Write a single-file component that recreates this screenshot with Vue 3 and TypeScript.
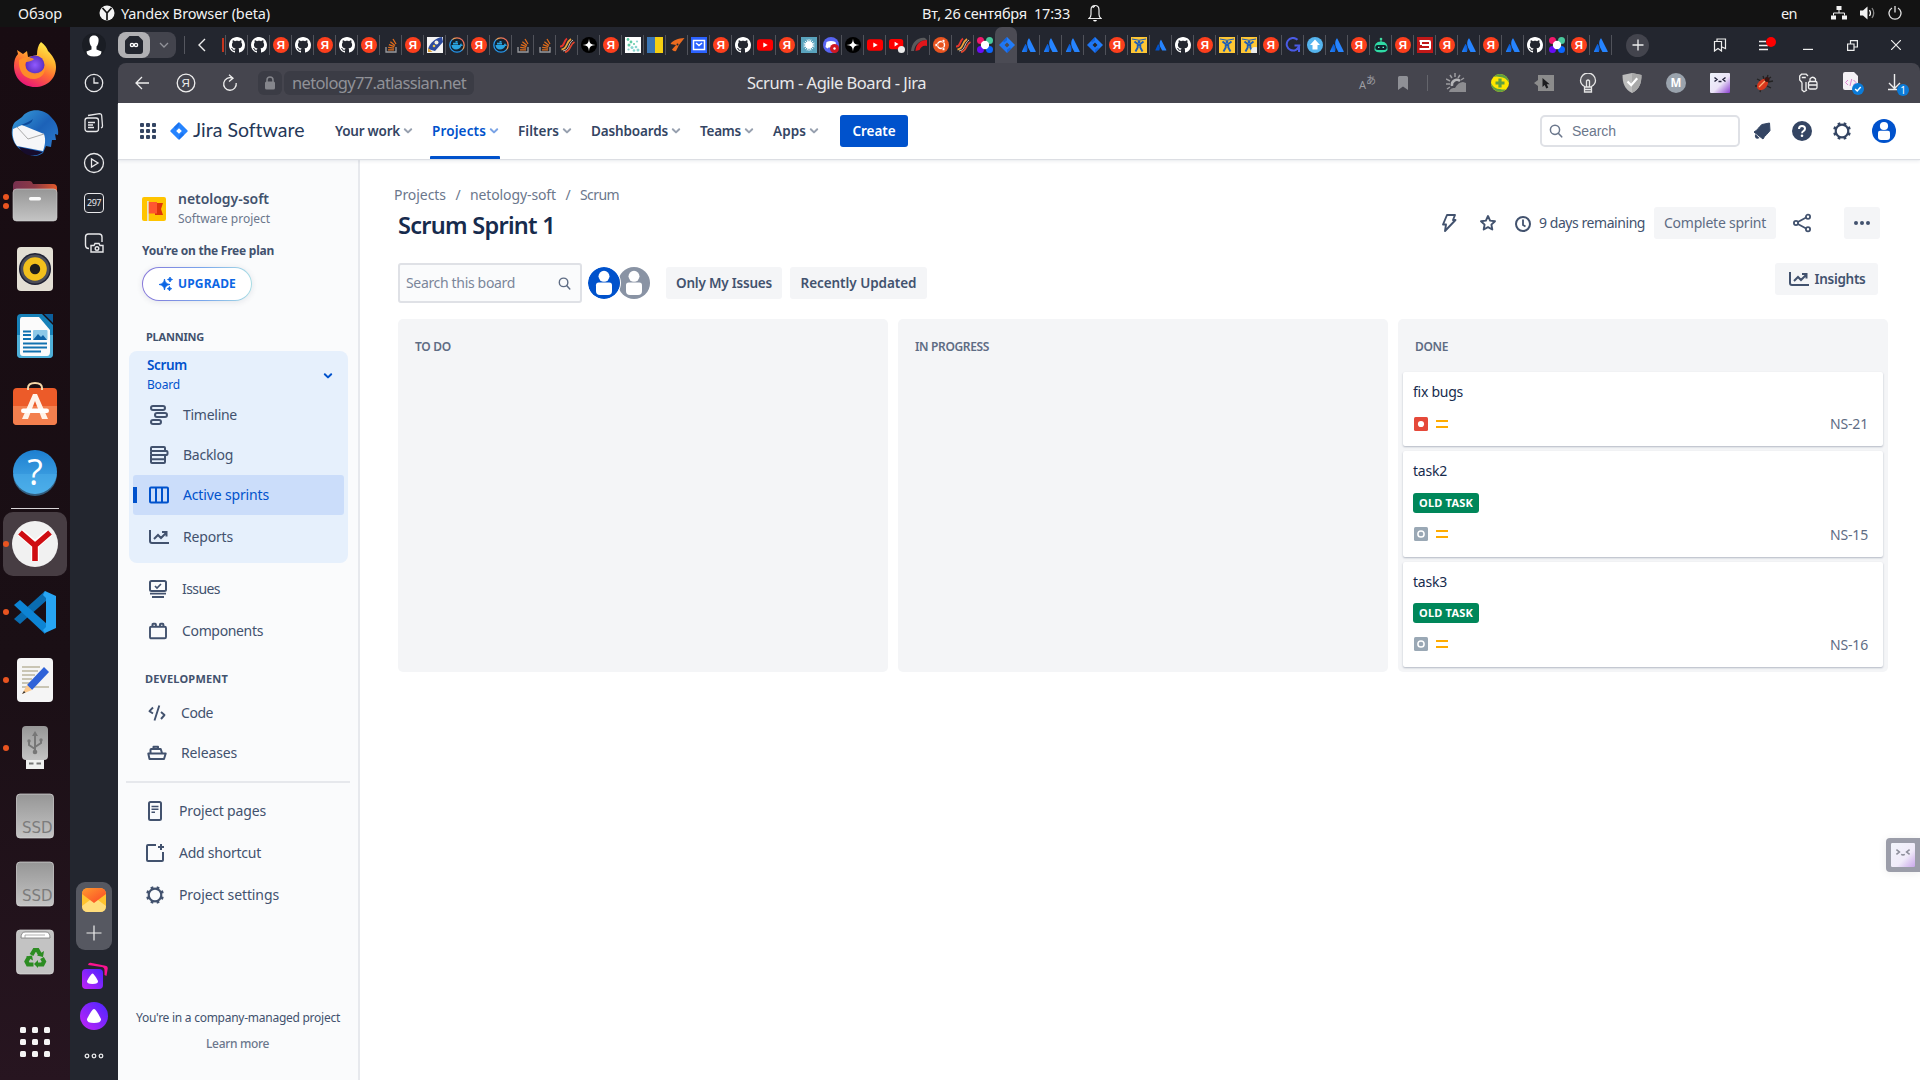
<script setup lang="ts">
import type { Directive } from 'vue'

// Tracks a label so that it takes exactly the given width.
const vFit: Directive<HTMLElement, number> = {
  mounted(el, { value }) {
    const n = (el.textContent ?? '').length
    const natural = el.getBoundingClientRect().width
    el.style.letterSpacing = `${((value - natural) / n).toFixed(3)}px`
    el.style.width = `${value}px`
  },
}

const tabs: string[] = (
  'gh gh ya gh ya gh ya so ya feather docker ya docker so so flame star ya molecule duo bird mail ya gh yt ya snow discord star yt ytdot arc ubuntu flame four ' +
  'jira atl atl atl jira ya jack atlsm gh ya jack jackdot ya g up atl ya robot ya sber ya atl ya atl gh four ya atl'
).split(' ')
const activeTab = 35

const extensions = ['weather', 'plus', 'cursor', 'bulb', 'shield', 'm', 'face', 'bug', 'key', 'codefile', 'download']

interface DockItem { icon: string; h: number; dots: number; active?: boolean }
const dockTop: DockItem[] = [
  { icon: 'firefox', h: 69, dots: 0 },
  { icon: 'thunderbird', h: 69, dots: 0 },
  { icon: 'files', h: 68, dots: 2 },
  { icon: 'rhythm', h: 67, dots: 0 },
  { icon: 'writer', h: 68, dots: 0 },
  { icon: 'software', h: 67, dots: 0 },
  { icon: 'help', h: 70, dots: 0 },
]
const dockBottom: DockItem[] = [
  { icon: 'yabrowser', h: 68, dots: 1, active: true },
  { icon: 'vscode', h: 68, dots: 1 },
  { icon: 'gedit', h: 68, dots: 1 },
  { icon: 'usb', h: 68, dots: 1 },
  { icon: 'ssd', h: 68, dots: 0 },
  { icon: 'ssd', h: 68, dots: 0 },
  { icon: 'trash', h: 68, dots: 0 },
]

const nav = [
  { label: 'Your work', w: 65 },
  { label: 'Projects', w: 54, active: true },
  { label: 'Filters', w: 41 },
  { label: 'Dashboards', w: 77 },
  { label: 'Teams', w: 41 },
  { label: 'Apps', w: 33 },
]

const boardItems = [
  { icon: 'timeline', label: 'Timeline', w: 54 },
  { icon: 'backlog', label: 'Backlog', w: 50 },
  { icon: 'board', label: 'Active sprints', w: 86, active: true },
  { icon: 'chart', label: 'Reports', w: 50 },
]

interface Card { title: string; w: number; label?: string; type: string; key: string }
interface Column { name: string; w: number; cards: Card[] }
const columns: Column[] = [
  { name: 'TO DO', w: 36, cards: [] },
  { name: 'IN PROGRESS', w: 74, cards: [] },
  {
    name: 'DONE',
    w: 33,
    cards: [
      { title: 'fix bugs', w: 50, type: 'bugtype', key: 'NS-21' },
      { title: 'task2', w: 34, label: 'OLD TASK', type: 'tasktype', key: 'NS-15' },
      { title: 'task3', w: 34, label: 'OLD TASK', type: 'tasktype', key: 'NS-16' },
    ],
  },
]
</script>

<template>
  <svg class="defs" width="0" height="0" aria-hidden="true">
    <defs>
      <linearGradient id="gFox" x1="0.8" y1="0" x2="0.3" y2="1"><stop offset="0" stop-color="#fff44f" /><stop offset=".35" stop-color="#ffb02e" /><stop offset=".6" stop-color="#ff6a34" /><stop offset="1" stop-color="#e8127c" /></linearGradient>
      <radialGradient id="gGlobe"><stop offset="0" stop-color="#9059ff" /><stop offset="1" stop-color="#5b2fc0" /></radialGradient>
      <linearGradient id="gBird" x1="0" y1="0" x2="1" y2="1"><stop offset="0" stop-color="#3aa0dc" /><stop offset=".5" stop-color="#1c62b8" /><stop offset="1" stop-color="#2f7fd0" /></linearGradient>
      <linearGradient id="gGrey" x1="0" y1="0" x2="0" y2="1"><stop offset="0" stop-color="#969696" /><stop offset="1" stop-color="#c4c4c4" /></linearGradient>
      <linearGradient id="gFold" x1="0" y1="0" x2="1" y2="0"><stop offset="0" stop-color="#77304f" /><stop offset=".5" stop-color="#8d3a45" /><stop offset="1" stop-color="#e2592b" /></linearGradient>
      <linearGradient id="gSky" x1="0" y1="0" x2="0" y2="1"><stop offset="0" stop-color="#1d7fd0" /><stop offset="1" stop-color="#4db0ea" /></linearGradient>
      <linearGradient id="gMail" x1="0" y1="0" x2="1" y2="1"><stop offset="0" stop-color="#ff9a2e" /><stop offset="1" stop-color="#fb4526" /></linearGradient>
      <linearGradient id="gAlice" x1="0" y1="1" x2="1" y2="0"><stop offset="0" stop-color="#c223f7" /><stop offset="1" stop-color="#4a26ff" /></linearGradient>
      <linearGradient id="gFace" x1="0" y1="0" x2="1" y2="1"><stop offset="0" stop-color="#eef3fb" /><stop offset=".55" stop-color="#ebe4f7" /><stop offset="1" stop-color="#8b3fd0" /></linearGradient>
      <linearGradient id="gSoft" x1="0" y1="0" x2="1" y2="1"><stop offset="0" stop-color="#f2f5fb" /><stop offset=".6" stop-color="#f0ebf9" /><stop offset="1" stop-color="#c9a6ea" /></linearGradient>
      <linearGradient id="gDock" x1="0" y1="1" x2="1" y2="0"><stop offset="0" stop-color="#2496ed" /><stop offset=".45" stop-color="#2496ed" /><stop offset=".6" stop-color="#f0a050" /><stop offset="1" stop-color="#e84a5f" /></linearGradient>
      <linearGradient id="gJira" x1="1" y1="0" x2="0" y2="1"><stop offset="0" stop-color="#2684ff" /><stop offset="1" stop-color="#1a6ff0" /></linearGradient>
      <linearGradient id="gAtl" x1="1" y1="0" x2="0" y2="1"><stop offset="0" stop-color="#0052cc" /><stop offset="1" stop-color="#2684ff" /></linearGradient>
    </defs>

    <!-- favicons -->
    <symbol id="gh" viewBox="0 0 16 16"><path fill="#fff" d="M8 0C3.58 0 0 3.58 0 8c0 3.54 2.29 6.53 5.47 7.59.4.07.55-.17.55-.38 0-.19-.01-.82-.01-1.49-2.01.37-2.53-.49-2.69-.94-.09-.23-.48-.94-.82-1.13-.28-.15-.68-.52-.01-.53.63-.01 1.08.58 1.23.82.72 1.21 1.87.87 2.33.66.07-.52.28-.87.51-1.07-1.78-.2-3.64-.89-3.64-3.95 0-.87.31-1.59.82-2.15-.08-.2-.36-1.02.08-2.12 0 0 .67-.21 2.2.82.64-.18 1.32-.27 2-.27s1.36.09 2 .27c1.53-1.04 2.2-.82 2.2-.82.44 1.1.16 1.92.08 2.12.51.56.82 1.27.82 2.15 0 3.07-1.87 3.75-3.65 3.95.29.25.54.73.54 1.48 0 1.07-.01 1.93-.01 2.2 0 .21.15.46.55.38A8.01 8.01 0 0 0 16 8c0-4.42-3.58-8-8-8z" /></symbol>
    <symbol id="so" viewBox="0 0 16 16"><path d="M3 10v5h10v-5" fill="none" stroke="#9a9b9e" stroke-width="1.3" /><path d="M5 12.8h6M5.2 10.3l5.9.8M5.9 7.6l5.5 2.1M7.4 4.8l4.6 3.7M10 2l3 5" stroke="#e06d1c" stroke-width="1.3" /></symbol>
    <symbol id="feather" viewBox="0 0 16 16"><path fill="#f4f4f4" d="M0 0h16v16H0z" /><path d="M1 12C3 6 8 1 15 0l1 5L8 14z" fill="#2c4a9c" /><circle cx="9.500" cy="5.500" r="2" fill="#f3efdf" /><circle cx="7" cy="9" r="1.300" fill="#e9c64a" /><path d="M1 11l4.500 4H1z" fill="#d9a03b" /></symbol>
    <symbol id="docker" viewBox="0 0 16 16"><circle cx="8" cy="8" r="7.2" fill="#14222f" stroke="url(#gDock)" stroke-width="1.300" /><path d="M2.500 8h8.400c.2-1 .8-1.500 1.200-1.800.5.500.7 1 .6 1.600.5 0 1 0 1.300.2-.3.800-1 1.100-1.800 1.100C11.500 11.500 9.500 12.500 7 12.500 4.300 12.500 2.600 10.800 2.500 8z M4 5.800h5v1.700H4z M6.500 4h2v1.500h-2z" fill="#2aa3e0" /></symbol>
    <symbol id="flame" viewBox="0 0 16 16"><path d="M1 9.500C6 10 4 4 8 1.500" stroke="#e5342c" stroke-width="2" fill="none" /><path d="M2.500 12.500C9 12 6 6 12 2" stroke="#f0a33a" stroke-width="1.800" fill="none" /><path d="M6 15c6-1 4-7 9.500-10" stroke="#e0452d" stroke-width="1.800" fill="none" /><path d="M4 14c7-1 4.500-7 10-11" stroke="#f5e0d0" stroke-width=".8" fill="none" /></symbol>
    <symbol id="star" viewBox="0 0 16 16"><circle cx="8" cy="8" r="8" fill="#000" /><path fill="#fff" d="M8 1.500C8.300 6.200 9.800 7.700 14.500 8 9.800 8.300 8.300 9.800 8 14.500 7.700 9.800 6.200 8.300 1.500 8 6.200 7.700 7.700 6.200 8 1.500z" /></symbol>
    <symbol id="molecule" viewBox="0 0 16 16"><path fill="#fff" d="M0 0h16v16H0z" /><g fill="#5fcba4"><circle cx="3" cy="2.500" r="1.400" /><circle cx="6" cy="5" r="1.400" /><circle cx="4" cy="8" r="1.500" /><circle cx="9" cy="7" r="1" /></g><g fill="#8ad6d0"><circle cx="7" cy="10.500" r="1.500" /><circle cx="11" cy="10" r="1.300" /><circle cx="13" cy="13" r="1.500" /><circle cx="9" cy="13.500" r="1.300" /><circle cx="12" cy="4.500" r="1.100" /><circle cx="3.500" cy="12.500" r="1.100" /></g></symbol>
    <symbol id="duo" viewBox="0 0 16 16"><path fill="#3b76b5" d="M0 0h8v16H0z" /><path fill="#f6cf12" d="M8 0h8v16H8z" /></symbol>
    <symbol id="bird" viewBox="0 0 16 16"><path fill="#ec6b1f" d="M15.500 1C9 1.500 4 3 1.500 7l5.500 1-4 4.500c1 1.500 2.500 2 4 1.500l3-6z" /><circle cx="8.500" cy="7.500" r="1" fill="#23262f" /></symbol>
    <symbol id="mail" viewBox="0 0 16 16"><rect width="16" height="16" fill="#2b62ff" /><path d="M2.500 3.500h11v9h-11zM5 6l3 2.500L11 6" fill="none" stroke="#fff" stroke-width="1.500" /></symbol>
    <symbol id="yt" viewBox="0 0 16 16"><rect y="2.300" width="16" height="11.400" rx="3" fill="#f00" /><path fill="#fff" d="M6.300 5.400v5.200L10.700 8z" /></symbol>
    <symbol id="ytdot" viewBox="0 0 18 18"><rect y="2.300" width="16" height="11.400" rx="3" fill="#f00" /><path fill="#fff" d="M6.300 5.400v5.200L10.700 8z" /><circle cx="14" cy="14" r="4" fill="#ececec" /></symbol>
    <symbol id="snow" viewBox="0 0 16 16"><rect width="16" height="16" fill="#59a3bd" /><circle cx="8" cy="8" r="3.800" fill="#fff" /><path d="M8 2v12M2.500 8h11M4 4l8 8M12 4l-8 8M6 2.500l4 11M10 2.500l-4 11M2.500 6l11 4M2.500 10l11-4" stroke="#fff" stroke-width=".8" /></symbol>
    <symbol id="discord" viewBox="0 0 16 16"><circle cx="8" cy="8" r="8" fill="#5865f2" /><path fill="#fff" d="M3.500 5Q8 3 12.500 5l1 5-2 1.500-1-1h-5l-1 1-2-1.500z" /><circle cx="11.500" cy="11.500" r="4.500" fill="#d01822" /><circle cx="11.500" cy="11.500" r="1.200" fill="#fff" /></symbol>
    <symbol id="arc" viewBox="0 0 16 16"><path d="M0 14C1 5 7 0 14 1l2 2C9 3 4 7 3 14z" fill="#5a5a5c" /><path d="M4.500 14C5 7 9 3 16 3v6c-4-1-6 1-7.500 4z" fill="#e0161b" /></symbol>
    <symbol id="ubuntu" viewBox="0 0 16 16"><circle cx="8" cy="8" r="8" fill="#e95420" /><circle cx="8" cy="8" r="3.500" fill="none" stroke="#fff" stroke-width="1.400" /><g fill="#fff" stroke="#e95420" stroke-width=".6"><circle cx="3.300" cy="8" r="1.500" /><circle cx="10.500" cy="3.900" r="1.500" /><circle cx="10.500" cy="12.100" r="1.500" /></g></symbol>
    <symbol id="four" viewBox="0 0 16 16"><circle cx="3.500" cy="3.500" r="3.500" fill="#f0196b" /><circle cx="12.500" cy="3.500" r="3.500" fill="#49c99c" /><circle cx="3.500" cy="12.500" r="3.500" fill="#6a0df5" /><circle cx="12.500" cy="12.500" r="3.500" fill="#0b66ff" /><circle cx="8" cy="8" r="4.200" fill="#fff" /></symbol>
    <symbol id="jira" viewBox="0 0 16 16"><path fill="url(#gJira)" fill-rule="evenodd" d="M8 0l8 8-8 8-8-8zM8 5.500L5.500 8 8 10.500 10.500 8z" /><path d="M8 0v3.500L5 5.500 4 4zM8 16v-3.500l3-2 1 1.500z" fill="#0a56cf" opacity=".6" /></symbol>
    <symbol id="jiralogo" viewBox="0 0 16 16"><path fill="#2684ff" fill-rule="evenodd" d="M7.300.6q.7-.7 1.400 0l6.700 6.700q.7.7 0 1.400l-6.700 6.700q-.7.7-1.400 0L.6 8.700q-.7-.7 0-1.400zM8 5.500L5.500 8 8 10.500 10.500 8z" /><path d="M8 .3v3.200L5 6.500 3.500 4.500zM8 15.700v-3.200l3-3 1.500 2z" fill="#0f62e0" opacity=".5" /></symbol>
    <symbol id="atl" viewBox="0 0 16 16"><path d="M4.900 7.300c-.3-.3-.6-.2-.8.1L1 14.300c-.2.400 0 .7.4.7h4.500C7 12.500 6.700 9.300 4.900 7.300z" fill="url(#gAtl)" /><path d="M7.600 1.600c-1.900 3-1.700 6.300-.5 8.800l2.200 4.300c.1.200.2.300.4.300h4.600c.4 0 .6-.4.400-.7L8.300 1.600c-.2-.3-.5-.3-.7 0z" fill="#2684ff" /></symbol>
    <symbol id="atlsm" viewBox="-2 -2 20 20"><path d="M4.900 7.300c-.3-.3-.6-.2-.8.1L1 14.300c-.2.400 0 .7.4.7h4.500C7 12.500 6.700 9.300 4.900 7.300z" fill="#0052cc" /><path d="M7.600 1.600c-1.900 3-1.700 6.300-.5 8.800l2.200 4.300c.1.200.2.300.4.300h4.600c.4 0 .6-.4.400-.7L8.300 1.600c-.2-.3-.5-.3-.7 0z" fill="#2684ff" /></symbol>
    <symbol id="jack" viewBox="0 0 16 16"><rect width="16" height="16" fill="#ffc734" /><g fill="none" stroke="#1f5fb8" stroke-width="1.900"><path d="M1 2q7 2.500 14 0" stroke-width="1" /><path d="M3.500 4.500L8 8l4.500-3.500M6.700 8v2.500L4.500 14.500M9.300 8v2.500l2.200 4" /></g><circle cx="8" cy="5" r="1.400" fill="#1f5fb8" /></symbol>
    <symbol id="jackdot" viewBox="0 0 16 16"><rect width="16" height="16" fill="#ffc734" /><g fill="none" stroke="#1f5fb8" stroke-width="1.900"><path d="M1 2q7 2.500 14 0" stroke-width="1" /><path d="M3.500 4.500L8 8l4.500-3.500M6.700 8v2.500L4.500 14.500M9.300 8v2.500l2.200 4" /></g><circle cx="8" cy="5" r="1.400" fill="#1f5fb8" /><circle cx="14" cy="14" r="4" fill="#ececec" /></symbol>
    <symbol id="g" viewBox="0 0 16 16"><path d="M12.500 2.800A6.300 6.300 0 1 0 14.200 8.500H9.500M14 8.500V15" fill="none" stroke="#4a5be6" stroke-width="2" /></symbol>
    <symbol id="up" viewBox="0 0 16 16"><circle cx="8" cy="8" r="8" fill="#55b4ee" /><path fill="#fff" d="M8 2.500l5 5.500h-2.500v4.500h-5V8H3z" /></symbol>
    <symbol id="robot" viewBox="0 0 16 16"><circle cx="8" cy="2" r="1.300" fill="#3fd9a0" /><path d="M8 2v3" stroke="#3fd9a0" /><path d="M1.500 13Q.5 4.500 8 4.500T14.500 13Q13 15.500 8 15.500T1.500 13z" fill="#2fdba6" /><rect x="2.300" y="8" width="11.400" height="5" rx="2.500" fill="#10202a" /><path d="M5 10.300h1.500M9.500 10.300H11" stroke="#62f0d0" stroke-width="1.300" /></symbol>
    <symbol id="sber" viewBox="0 0 16 16"><rect width="16" height="16" fill="#c01818" /><path d="M2.500 4H12q1 0 1 1v6q0 1-1 1H2.500M5 8h8M4 4v4" fill="none" stroke="#fff" stroke-width="2" /></symbol>

    <!-- toolbar extensions -->
    <symbol id="weather" viewBox="0 0 20 20"><g stroke="#9c9ca0" stroke-width="1.500"><path d="M9 0v4M4 2l2 3M0 6l4 2M0 11h4M14 2l-2 3M1 16l3-2M18 5l-3 2" /></g><path d="M6 13a5 5 0 0 1 8-5" fill="none" stroke="#b5b5b8" stroke-width="2.500" /><path d="M3 19c1-4 4-4 6-4 2-4 5-6 8-6l3 1v9z" fill="#8c8c90" /></symbol>
    <symbol id="plus" viewBox="0 0 20 20"><circle cx="10" cy="10" r="9" fill="#ffe600" /><path d="M3.500 4A9 9 0 0 1 19 10Q16 4 10 4 6 3 3.500 4zM16.500 16A9 9 0 0 1 1 10q3 6 9 6 4 1 6.500 0z" fill="#5fa042" /><path d="M10 5.500v9M5.500 10h9" stroke="#5fa042" stroke-width="3.200" /></symbol>
    <symbol id="cursor" viewBox="0 0 20 20"><path d="M4 2h16v16H4v-5l-4-3 4-3z" fill="#8c8c8c" /><path d="M8.500 5v9l2.200-2 1.600 3.500 2-1-1.600-3.300h3z" fill="#1d1d1f" /></symbol>
    <symbol id="bulb" viewBox="0 0 20 20"><path d="M6.500 13.500C4 12 2.500 10 2.500 7.500a7.500 7.500 0 0 1 15 0c0 2.500-1.500 4.500-4 6V19h-7z" fill="#55555c" stroke="#e5e5e5" stroke-width="1.300" /><path d="M8.500 14V8q1.500-2 3 0v6M6.500 14h7M7 16.500h6" fill="none" stroke="#e5e5e5" stroke-width="1.300" /></symbol>
    <symbol id="shield" viewBox="0 0 20 20"><path d="M10 0l9.500 2c0 8-2 14-9.500 18C2.500 16 .5 10 .5 2z" fill="#bcbcbc" /><path d="M10 0l9.500 2c0 8-2 14-9.500 18z" fill="#a9a9a9" /><path d="M5.500 8.500l3.700 3.700 6-7" fill="none" stroke="#fff" stroke-width="2.200" /></symbol>
    <symbol id="face" viewBox="0 0 20 20"><rect width="20" height="20" rx="1" fill="url(#gFace)" /><path d="M4.500 4.500l2.500 2-2.500 2M15.500 4.500l-2.500 2 2.500 2M8.500 8.500h3" fill="none" stroke="#22223a" stroke-width="1.400" /></symbol>
    <symbol id="bug" viewBox="0 0 20 20"><path d="M3 6l4 2M9 3l1 3M1 13h4M6 19l1-4M17 4l-3 2M19 8l-5 1M17 15l-4-2M14 2l-1 3" stroke="#222" stroke-width="1.300" /><ellipse cx="8.500" cy="11.500" rx="4.500" ry="6.500" transform="rotate(42 8.500 11.500)" fill="#d8371c" /><circle cx="13" cy="6.500" r="2.500" fill="#3a1512" /><path d="M5 14l6-6" stroke="#ffb27a" stroke-width="1.300" /></symbol>
    <symbol id="key" viewBox="0 0 20 20"><path d="M4 9.500L1.700 7V3L3.500 1.200h4.700L10 3M4 9.500V17l2 1.700 3-1.700M3.800 4.500h4M8 9v8" fill="none" stroke="#f0f0f0" stroke-width="1.300" /><rect x="10.500" y="8.500" width="8.500" height="7.500" rx="1.500" fill="none" stroke="#f0f0f0" stroke-width="1.300" /><path d="M12 8.500V6q2.700-3.500 5.500 0v2.500M10.500 12H19" fill="none" stroke="#f0f0f0" stroke-width="1.300" /></symbol>
    <symbol id="codefile" viewBox="0 0 24 24"><path d="M3 3q0-2 2-2h9l4 4v14H5q-2 0-2-2z" fill="#f3f0f4" /><path d="M8 9l-2.500 2.500L8 14M13.500 9l2.500 2.500L13.500 14M11.700 8l-1.700 7" stroke="#dd7fcf" fill="none" /><circle cx="18" cy="18" r="6" fill="#0b7bd8" /><path d="M15.200 18l2 2 3.500-4" fill="none" stroke="#fff" stroke-width="1.500" /></symbol>

    <!-- dock -->
    <symbol id="firefox" viewBox="0 0 48 48"><path d="M30 2c4 3 6 6 7 9 4 4 8 9 8 16 0 12-9 20-21 20S3 38 3 26c0-5 1-9 4-12l-1-4 6 4 4-3 1 6 9-2c0-5 1-10 4-13z" fill="url(#gFox)" /><circle cx="24" cy="25" r="9.500" fill="url(#gGlobe)" /><path d="M8 20c4-3 10-4 15-1-2 3-8 2-9 4 0 6 3 9 8 10 6 1 10-2 12-7 1 8-5 13-11 13C13 39 7 31 8 20z" fill="#ff9426" opacity=".9" /></symbol>
    <symbol id="thunderbird" viewBox="0 0 48 48"><path d="M11 8C17-1 33-1 40 8c5 5 8 10 7 18l-3-1 1 6-4 0-1 7-5-1-3 7c-7 5-14 3-20-2C0 36-2 20 4 13z" fill="url(#gBird)" /><path d="M2 20l9-4 22 9c2 6 1 11-1 17L6 37C2 32 1 25 2 20z" fill="#f6f6f8" /><path d="M6 18l11 12 16-5" fill="none" stroke="#aaa" /><path d="M8 38l24 5q-7 5-15 3-6-2-9-8z" fill="#160c2c" /><path d="M10 16q8-3 12-6-2 7-12 6z" fill="#0d4a9a" /></symbol>
    <symbol id="files" viewBox="0 0 48 48"><path d="M2 9q0-5 4-5h13q2 0 3 3h20q4 0 4 4v10H2z" fill="url(#gFold)" /><rect x="2" y="12" width="44" height="32" rx="3.500" fill="url(#gGrey)" stroke="#d0d0d0" stroke-width=".6" /><rect x="18" y="20" width="12" height="3.400" rx="1.600" fill="#fafafa" /></symbol>
    <symbol id="rhythm" viewBox="0 0 48 48"><rect x="6" y="2" width="36" height="44" rx="4" fill="#e3dfd4" /><circle cx="24" cy="24" r="16" fill="#1e2133" /><circle cx="24" cy="24" r="14.500" fill="#4c4e58" /><circle cx="24" cy="24" r="11.800" fill="#f2c01c" /><circle cx="24" cy="24" r="5.200" fill="#1d1d1d" /></symbol>
    <symbol id="writer" viewBox="0 0 48 48"><path d="M10 2h21l11 11v29q0 4-4 4H10q-4 0-4-4V6q0-4 4-4z" fill="#1781b8" /><path d="M6 23h36v19q0 4-4 4H10q-4 0-4-4z" fill="#4fb0d8" /><path d="M11 5h17l11 13v22q0 4-3 4H12q-3 0-3-3V8q0-3 2-3z" fill="#fbfbfb" /><path d="M33 2h9v9z" fill="#0c5f9c" /><path d="M12 19.500h8M12 23h8M12 27h8M12 31.500h24M12 35.500h24M12 39.500h18" stroke="#1272b0" stroke-width="2" /><rect x="22" y="18" width="14.500" height="10" rx="1" fill="#8cc8e8" /><path d="M22 28l5-6 3 3 2-2 4 5z" fill="#0c62a6" /></symbol>
    <symbol id="software" viewBox="0 0 48 48"><path d="M17 11V8q0-5 7-5t7 5v3" fill="none" stroke="#f6d7a8" stroke-width="2" /><rect x="2" y="8" width="44" height="37" rx="4" fill="#ec5b29" /><path d="M2 26h44v15q0 4-4 4H6q-4 0-4-4z" fill="#f37f4e" /><path d="M17 10V8M31 10V8" stroke="#f6d7a8" stroke-width="2" /><path d="M22 14h4l11 25h-6l-7-18-7 18h-6z" fill="#fff3ea" /><rect x="10" y="28.500" width="28" height="4.500" rx="2.200" fill="#fff" /></symbol>
    <symbol id="yabrowser" viewBox="0 0 48 48"><circle cx="24" cy="24" r="23" fill="#f1f1f1" /><path d="M9.500 12.500L24 25v16M38.500 12.500L24 25" fill="none" stroke="#fff" stroke-width="8" /><path d="M9 12.500L24 25.500V41M39 12.500L24 25.500" fill="none" stroke="#cf0d12" stroke-width="5.600" /></symbol>
    <symbol id="vscode" viewBox="0 0 48 48"><path d="M3 31l6 5L36 12 34 3z" fill="#0a6cb0" /><path d="M3 17l6-5 27 24-2 10z" fill="#0d84d4" /><path d="M34 3l11 5v32l-11 5-2-3 3-3V10l-3-3z" fill="#27a5f3" /></symbol>
    <symbol id="gedit" viewBox="0 0 48 48"><rect x="6" y="2" width="36" height="44" rx="4" fill="#f5f5f5" /><path d="M11 11h18M11 15h16M11 19h13M11 23h10M11 27h8M11 31h27" stroke="#c9c5b4" stroke-width="1.800" /><path d="M16 29L33 11l5 5-17 18z" fill="#2f62d8" /><path d="M11 38l5-9 5 5z" fill="#fbc88c" /><path d="M11 38l2-3 1.500 1.500z" fill="#333" /></symbol>
    <symbol id="usb" viewBox="0 0 48 48"><rect x="15" y="33" width="18" height="12" fill="#f0f0f0" /><path d="M18 38.500h4.500v2H18zM25.500 38.500H30v2h-4.500z" fill="#777" /><rect x="11" y="2" width="26" height="34" rx="4" fill="url(#gGrey)" /><path d="M24 28V11M18 17v4l6 4M30 16v3l-6 4" fill="none" stroke="#777" stroke-width="2" /><path d="M24 7l3 5h-6z" fill="#777" /><circle cx="24" cy="28" r="2.300" fill="#777" /><circle cx="18" cy="17" r="1.700" fill="#777" /><circle cx="30" cy="16" r="1.700" fill="#777" /></symbol>
    <symbol id="trash" viewBox="0 0 48 48"><rect x="5.500" y="2" width="37" height="44" rx="3.500" fill="#c3c3c3" stroke="#ddd" stroke-width=".7" /><path d="M10 10q0-6 4-6h21q4 0 4 6z" fill="#fff" stroke="#777" stroke-width=".8" /><path d="M14 10V7h20" fill="none" stroke="#999" stroke-width=".8" /><g fill="none" stroke="#2c8c22" stroke-width="4.200"><path d="M20.500 27l3-5h3l2.500 4.500M31 30l2 3.500-1.500 3H26M22.500 36.500H17l-1.500-3L18 29" /></g><path d="M26 27.500l6 1.500 1-6zM27 32v8l-4-4zM15 28.500l6-1 1 5z" fill="#2c8c22" /></symbol>

    <!-- Jira glyphs -->
    <symbol id="chev" viewBox="0 0 10 8"><path d="M1.800 2.200L5 5.400l3.200-3.200" fill="none" stroke="currentColor" stroke-width="2" stroke-linecap="round" stroke-linejoin="round" /></symbol>
    <symbol id="search" viewBox="0 0 14 14"><circle cx="6" cy="5.800" r="4.600" fill="none" stroke="currentColor" stroke-width="1.500" /><path d="M9.300 9.200l3.400 3.600" stroke="currentColor" stroke-width="1.600" stroke-linecap="round" /></symbol>
    <symbol id="gear" viewBox="0 0 20 20"><circle cx="10" cy="10" r="6.300" fill="none" stroke="currentColor" stroke-width="2.200" /><path d="M7.600 4.500L6.700 1.700M12.400 4.500l.9-2.800M7.600 15.500l-.9 2.800M12.400 15.500l.9 2.800M4.500 7.600l-2.800-.9M4.500 12.400l-2.800.9M15.500 7.600l2.800-.9M15.500 12.400l2.800.9" stroke="currentColor" stroke-width="2.800" /></symbol>
    <symbol id="person" viewBox="0 0 24 24"><circle cx="12" cy="12" r="12" fill="currentColor" /><circle cx="12" cy="7" r="4.100" fill="#fff" /><path d="M6 13.700q0-2 2-2h8q2 0 2 2V18q0 3-3 3H9q-3 0-3-3z" fill="#fff" /></symbol>
    <symbol id="timeline" viewBox="0 0 20 20"><g fill="none" stroke="currentColor" stroke-width="2"><rect x="2" y="1" width="14" height="4" rx="2" /><rect x="6" y="8" width="12" height="4" rx="2" /><rect x="2" y="15" width="10" height="4" rx="2" /></g></symbol>
    <symbol id="backlog" viewBox="0 0 20 20"><g fill="none" stroke="currentColor" stroke-width="2"><path d="M2 6V3q0-1 1-1h12q1 0 1 1v3M2 10v7q0 1 1 1h12q1 0 1-1v-7M2 14.200h14" /><rect x="2" y="6" width="16.500" height="4" rx="1" /></g></symbol>
    <symbol id="board" viewBox="0 0 20 20"><path d="M1 3.500q0-1 1-1h16q1 0 1 1v13q0 1-1 1H2q-1 0-1-1zM7 2.500v15M13 2.500v15" fill="none" stroke="currentColor" stroke-width="2" /></symbol>
    <symbol id="chart" viewBox="0 0 20 20"><path d="M1 3v11q0 2 2 2h17" fill="none" stroke="currentColor" stroke-width="2" /><path d="M5 12l4-4 3 3 5-5M13 5h4.500v4.500" fill="none" stroke="currentColor" stroke-width="2" /></symbol>
    <symbol id="issues" viewBox="0 0 18 18"><rect x="1" y="1" width="16" height="10" rx="1.500" fill="none" stroke="currentColor" stroke-width="2" /><path d="M6 6l2 2 4-4" fill="none" stroke="currentColor" stroke-width="1.700" /><path d="M1 13.700h16M3 17h12" stroke="currentColor" stroke-width="1.800" /></symbol>
    <symbol id="components" viewBox="0 0 18 18"><path d="M1 6q0-1.300 1.300-1.300h13.400Q17 4.700 17 6v9q0 1.300-1.300 1.300H2.300Q1 16.300 1 15zM3.500 4.500v-2q0-.7.700-.7h2q.7 0 .7.700v2M11 4.500v-2q0-.7.700-.7h2q.7 0 .7.700v2" fill="none" stroke="currentColor" stroke-width="1.900" /></symbol>
    <symbol id="code" viewBox="0 0 18 18"><path d="M5 3.500L1.500 7.200 5 9.500M13 8l3.500 3-3.500 4M11.300 1.500l-4.800 15" fill="none" stroke="currentColor" stroke-width="1.900" stroke-linejoin="round" /></symbol>
    <symbol id="ship" viewBox="0 0 20 18"><path d="M1.300 9.500h17.400l-1.700 5.500H2.500zM3.500 9V5.800q0-.8.800-.8h9.400l1.300 4M6.500 4.500V2.700h4.500v1.800" fill="none" stroke="currentColor" stroke-width="2" stroke-linejoin="round" /></symbol>
    <symbol id="page" viewBox="0 0 20 20"><rect x="4" y="1" width="12" height="18" rx="1.500" fill="none" stroke="currentColor" stroke-width="2" /><path d="M6.500 5.500h7M6.500 8.300h7M6.500 11.200h3.500" stroke="currentColor" stroke-width="1.600" /></symbol>
    <symbol id="shortcut" viewBox="0 0 20 20"><path d="M11 2H3q-1 0-1 1v14q0 1 1 1h14q1 0 1-1V9" fill="none" stroke="currentColor" stroke-width="2" /><path d="M16 1v6M13 4h6" stroke="currentColor" stroke-width="2" /></symbol>
    <symbol id="bugtype" viewBox="0 0 14 14"><rect width="14" height="14" rx="1.500" fill="#e5493a" /><circle cx="7" cy="7" r="3.100" fill="#fff" /></symbol>
    <symbol id="tasktype" viewBox="0 0 14 14"><rect width="14" height="14" rx="1.500" fill="#9aa8b5" /><circle cx="7" cy="7" r="3.100" fill="none" stroke="#fff" stroke-width="1.500" /></symbol>
  </svg>

  <div class="screen">
    <header class="sysbar">
      <span v-fit="44" class="t obzor">Обзор</span>
      <svg width="16" height="16" viewBox="0 0 16 16"><circle cx="8" cy="8" r="7.500" fill="#f2f2f2" /><path d="M3.500 3L8 8v7M12.500 3L8 8" fill="none" stroke="#131313" stroke-width="1.700" /></svg>
      <span v-fit="149" class="t appname">Yandex Browser (beta)</span>
      <span v-fit="148" class="t date">Вт, 26 сентября&nbsp; 17:33</span>
      <svg class="sysbell" width="14" height="18" viewBox="0 0 14 18"><path d="M1 14.500q2-1.500 2-4V6q0-4.500 4-4.500T11 6v4.500q0 2.500 2 4zM5 4q0-1.500 2-1.500" fill="none" stroke="#eee" stroke-width="1.200" /><path d="M5 16h4q-.5 1.500-2 1.500T5 16z" fill="#fff" /></svg>
      <span v-fit="16" class="t lang">en</span>
      <svg class="net" width="16" height="14" viewBox="0 0 16 14"><path d="M5.500 0h5v4h-5zM0 9.500h5v4H0zM11 9.500h5v4h-5z" fill="#f2f2f2" /><path d="M8 4v3M2.500 9.500V7h11v2.500" fill="none" stroke="#f2f2f2" /></svg>
      <svg class="vol" width="16" height="14" viewBox="0 0 16 14"><path d="M0 4.500h3L7.500.5v13L3 9.500H0z" fill="#f2f2f2" /><path d="M9.500 4q2 3 0 6" fill="none" stroke="#f2f2f2" stroke-width="1.300" /><path d="M12 2q3.500 5 0 10" fill="none" stroke="#888" stroke-width="1.300" /></svg>
      <svg class="pow" width="14" height="14" viewBox="0 0 14 14"><path d="M4 2a6 6 0 1 0 6 0M7 0v6.500" fill="none" stroke="#e4e4e4" stroke-width="1.300" /></svg>
    </header>

    <div class="desktop">
      <aside class="dock">
        <div class="dock-list first">
          <div v-for="d in dockTop" :key="d.icon" class="dock-item" :style="{ height: d.h + 'px' }">
            <div class="dots"><i v-for="n in d.dots" :key="n" /></div>
            <svg v-if="d.icon === 'help'" width="48" height="48" viewBox="0 0 48 48"><circle cx="24" cy="24" r="22" fill="url(#gSky)" /><path d="M2 26h44a22 22 0 0 1-44 0z" fill="#4caeea" opacity=".5" /><text x="24" y="37" text-anchor="middle" font-family="Open Sans, sans-serif" font-size="36" fill="#fff">?</text></svg>
            <svg v-else width="48" height="48"><use :href="'#' + d.icon" /></svg>
          </div>
        </div>
        <div class="dock-sep" />
        <div class="dock-list">
          <div v-for="(d, i) in dockBottom" :key="i" class="dock-item" :class="{ running: d.active }" :style="{ height: d.h + 'px' }">
            <div class="dots"><i v-for="n in d.dots" :key="n" /></div>
            <svg v-if="d.icon === 'ssd'" width="48" height="48" viewBox="0 0 48 48"><rect x="5.500" y="2" width="37" height="44" rx="3.500" fill="url(#gGrey)" stroke="#ddd" stroke-width=".7" /><text x="11" y="40.500" font-family="DejaVu Sans, sans-serif" font-size="15" textLength="30.500" fill="#7c7c7c">SSD</text></svg>
            <svg v-else width="48" height="48"><use :href="'#' + d.icon" /></svg>
          </div>
        </div>
        <div class="apps-grid"><i v-for="n in 9" :key="n" /></div>
      </aside>

      <aside class="ybar">
        <svg class="y1" width="24" height="24" viewBox="0 0 24 24"><circle cx="12" cy="12" r="12" fill="#1a1d24" /><path d="M12 2.500c3.500 0 5 2.500 4.500 6-.3 2.500-1 4-2 5v3l5 2q0 5-7.500 5T4.500 18.500l5-2v-3c-1-1-1.700-2.500-2-5C7 5 8.500 2.500 12 2.500z" fill="#fff" /></svg>
        <svg class="y2" width="22" height="22" viewBox="0 0 22 22" fill="none" stroke="#e8e8ea" stroke-width="1.300"><circle cx="11" cy="11" r="8.700" /><path d="M11 5.500V11h4.500" /></svg>
        <svg class="y3" width="22" height="22" viewBox="0 0 22 22" fill="none" stroke="#e8e8ea" stroke-width="1.300"><rect x="2" y="6" width="13.500" height="13.500" rx="2.500" /><path d="M5 3.500L16.500 1.700q2 0 2.200 2L19.500 14q0 1.500-1.500 2M5 10.500h7M5 13h5M5 15.500h6" /></svg>
        <svg class="y4" width="22" height="22" viewBox="0 0 22 22" fill="none" stroke="#e8e8ea" stroke-width="1.300"><circle cx="11" cy="11" r="9.500" /><path d="M8.500 7v8l6.500-4z" /></svg>
        <div class="count"><span v-fit="14" class="t">297</span></div>
        <svg class="y6" width="22" height="22" viewBox="0 0 22 22" fill="none" stroke="#e8e8ea" stroke-width="1.400"><path d="M6 16.500q-3.500 0-3.500-3.500V5q0-3 3-3h10.500q3 0 3 3v5" /><path d="M8 13.500h3l1-2h4l1 2h3v6.500H8z" /><circle cx="14" cy="16.500" r="1.800" /></svg>
        <div class="ygroup">
          <svg width="24" height="24" viewBox="0 0 24 24"><rect width="24" height="24" rx="6" fill="#ffc32e" /><path d="M0 18L12 9l12 9q0 6-6 6H6q-6 0-6-6z" fill="#ffdd7c" /><path d="M0 6q0-6 6-6h12q6 0 6 6L12 15z" fill="url(#gMail)" /></svg>
          <svg width="16" height="16" viewBox="0 0 16 16"><path d="M8 .5v15M.5 8h15" stroke="#eee" stroke-width="1.200" /></svg>
        </div>
        <svg class="y7" width="26" height="28" viewBox="0 0 26 28"><path d="M6 3Q6.500.500 8.500.700l15 3q2.700.6 2.200 3L24.500 14l-2-1V8.500Q22.500 5 19.500 5z" fill="#fa1390" /><rect y="7" width="21" height="20" rx="4" fill="url(#gAlice)" /><path d="M10.500 11.500q1.500 0 5.500 7.500.5 3-5.500 3T5 19q4-7.500 5.500-7.500z" fill="#fff" /></svg>
        <svg class="y8" width="28" height="28" viewBox="0 0 28 28"><circle cx="14" cy="14" r="14" fill="url(#gAlice)" /><path d="M14 7q2 0 7 10 .5 4-7 4t-7-4q5-10 7-10z" fill="#fff" /></svg>
        <svg class="y9" width="20" height="6" viewBox="0 0 20 6" fill="none" stroke="#e8e8ea" stroke-width="1.300"><circle cx="3" cy="3" r="1.800" /><circle cx="10" cy="3" r="1.800" /><circle cx="17" cy="3" r="1.800" /></svg>
      </aside>

      <div class="browser">
        <div class="tabstrip">
          <div class="private">
            <div class="private-on"><svg width="18" height="18" viewBox="0 0 18 18"><path d="M4.500 0h9L18 4.500V15q0 3-3 3H3q-3 0-3-3V4.500z" fill="#23262f" /><circle cx="7" cy="9" r="1.600" fill="none" stroke="#fff" stroke-width="1.400" /><circle cx="11" cy="9" r="1.600" fill="none" stroke="#fff" stroke-width="1.400" /></svg></div>
            <svg class="pchev" width="10" height="8" viewBox="0 0 10 8"><path d="M1 2l4 4 4-4" fill="none" stroke="#92939a" stroke-width="1.300" /></svg>
          </div>
          <i class="vsep" />
          <svg class="tback" width="10" height="14" viewBox="0 0 10 14"><path d="M8 1L2 7l6 6" fill="none" stroke="#eee" stroke-width="1.400" /></svg>
          <i class="halftab" />
          <div v-for="(tab, i) in tabs" :key="i" class="tab" :class="{ on: i === activeTab, after: i === activeTab + 1 }">
            <span v-if="tab === 'ya'" class="ya">Я</span>
            <svg v-else width="16" height="16"><use :href="'#' + tab" /></svg>
          </div>
          <i class="tabend" />
          <div class="newtab"><svg width="12" height="12" viewBox="0 0 12 12"><path d="M6 .5v11M.5 6h11" stroke="#eee" stroke-width="1.300" /></svg></div>
          <svg class="w1" width="14" height="14" viewBox="0 0 14 14" fill="none" stroke="#eee" stroke-width="1.200"><path d="M1.500 3.500h7v9.500L5 10.500 1.500 13zM4 3V1h8.500v9.500L9 9" /></svg>
          <svg class="w2" width="18" height="16" viewBox="0 0 18 16"><path d="M1 4.500h7M1 8.500h9M1 12.500h9" stroke="#eee" stroke-width="1.300" /><circle cx="13" cy="5" r="5" fill="#f00" /></svg>
          <svg class="w3" width="10" height="10" viewBox="0 0 10 10"><path d="M0 9.400h10" stroke="#eee" stroke-width="1.200" /></svg>
          <svg class="w4" width="11" height="11" viewBox="0 0 11 11" fill="none" stroke="#eee" stroke-width="1.200"><path d="M.6 4h6.400v6.400H.6zM3.500 4V.6h6.900V7H7" /></svg>
          <svg class="w5" width="10" height="10" viewBox="0 0 10 10"><path d="M0 0l10 10M10 0L0 10" stroke="#eee" stroke-width="1.200" /></svg>
        </div>

        <div class="toolbar">
          <svg class="b1" width="14" height="14" viewBox="0 0 14 14"><path d="M7 1L1 7l6 6M1 7h13" fill="none" stroke="#eee" stroke-width="1.300" /></svg>
          <svg class="b2" width="20" height="20" viewBox="0 0 20 20"><circle cx="10" cy="10" r="8.800" fill="none" stroke="#eee" stroke-width="1.300" /><text x="9.700" y="14" text-anchor="middle" font-family="Liberation Sans, sans-serif" font-size="11.500" fill="#eee">Я</text></svg>
          <svg class="b3" width="16" height="18" viewBox="0 0 16 18"><path d="M10.500 4.200A6.300 6.300 0 1 0 14.200 9M7 .8l4 3.400-4 3.300" fill="none" stroke="#eee" stroke-width="1.300" /></svg>
          <div class="lock"><svg width="10" height="14" viewBox="0 0 10 14"><path d="M2 6V4q0-3 3-3t3 3v2" fill="none" stroke="#85868c" stroke-width="1.500" /><rect y="5.500" width="10" height="8" rx="1.500" fill="#85868c" /></svg></div>
          <div class="url"><span v-fit="174" class="t">netology77.atlassian.net</span></div>
          <span v-fit="179" class="t ptitle">Scrum - Agile Board - Jira</span>
          <div class="b4"><span>A</span><span>あ</span></div>
          <svg class="b5" width="10" height="14" viewBox="0 0 10 14"><path d="M0 1.500Q0 0 1.500 0h7Q10 0 10 1.500V14L5 10.500 0 14z" fill="#8f9096" /></svg>
          <i class="bsep" />
          <div v-for="e in extensions" :key="e" class="ext" :class="e">
            <span v-if="e === 'm'" class="mbadge">M</span>
            <div v-else-if="e === 'download'" class="dl"><svg viewBox="0 0 24 24"><path d="M10.500 3v14M5 12l5.500 5.500L16 12M4 18.500h9" stroke="#eee" fill="none" stroke-width="1.400" /></svg><b>1</b></div>
            <svg v-else><use :href="'#' + e" /></svg>
          </div>
        </div>

        <div class="page">
          <header class="jhead">
            <div class="switcher"><i v-for="n in 9" :key="n" /></div>
            <svg class="jlogo" width="18" height="18"><use href="#jiralogo" /></svg>
            <span v-fit="111" class="t jname">Jira Software</span>
            <div v-for="n in nav" :key="n.label" class="navitem" :class="{ on: n.active }">
              <span v-fit="n.w" class="t">{{ n.label }}</span>
              <svg width="10" height="8"><use href="#chev" /></svg>
            </div>
            <button class="create"><span v-fit="43" class="t">Create</span></button>
            <div class="jsearch"><svg width="14" height="14"><use href="#search" /></svg><span v-fit="44" class="t">Search</span></div>
            <svg class="h1" width="18" height="18" viewBox="0 0 18 18"><path d="M1 10C4.500 8.500 5.500 5 9 2.500L16.500 1l.5 7.500C15 12 11.500 13.500 10 17z" fill="#344563" stroke="#344563" stroke-linejoin="round" /><path d="M2.500 12l4 4q-2.500 1.500-4 0t0-4z" fill="#344563" /></svg>
            <svg class="h2" width="20" height="20" viewBox="0 0 20 20"><circle cx="10" cy="10" r="10" fill="#344563" /><path d="M7 8q0-3 3-3t3 2.700q0 1.500-1.500 2.300-1.400.8-1.400 2.300" fill="none" stroke="#fff" stroke-width="2" /><circle cx="10" cy="14.700" r="1.300" fill="#fff" /></svg>
            <svg class="h3" width="20" height="20"><use href="#gear" /></svg>
            <svg class="h4" width="24" height="24"><use href="#person" /></svg>
          </header>

          <div class="jbody">
            <nav class="side">
              <div class="proj">
                <svg width="24" height="24" viewBox="0 0 24 24"><rect width="24" height="24" rx="2" fill="#ffc400" /><path d="M5 4h1.800v20H5z" fill="#e8e2cc" /><path d="M13 6h8l-2 6 2 6h-8z" fill="#de350b" /><path d="M6.800 5H15v11.500H6.800z" fill="#ff5630" /></svg>
                <div>
                  <span v-fit="91" class="t pname">netology-soft</span>
                  <span v-fit="92" class="t psub">Software project</span>
                </div>
              </div>
              <span v-fit="132" class="t plan">You're on the Free plan</span>
              <div class="upgrade"><svg width="14" height="14" viewBox="0 0 14 14"><path d="M5.500 2Q6 7 11 7.500 6 8 5.500 13 5 8 0 7.500 5 7 5.500 2zM11 0q.3 2.200 2.500 2.500Q11.300 2.800 11 5q-.3-2.200-2.500-2.500Q10.700 2.200 11 0zM10.500 9.500q.3 2 2.200 2.200-1.900.2-2.200 2.200-.3-2-2.200-2.200 1.900-.2 2.200-2.200z" fill="#0c66e4" stroke="#0c66e4" stroke-width=".8" /></svg><span v-fit="58" class="t">UPGRADE</span></div>
              <span v-fit="58" class="t sect s1">PLANNING</span>
              <div class="boardbox">
                <div class="boardhead">
                  <div><span v-fit="40" class="t bname">Scrum</span><span v-fit="33" class="t bsub">Board</span></div>
                  <svg width="10" height="8"><use href="#chev" /></svg>
                </div>
                <div v-for="b in boardItems" :key="b.icon" class="item" :class="{ on: b.active }">
                  <svg width="20" height="20"><use :href="'#' + b.icon" /></svg><span v-fit="b.w" class="t">{{ b.label }}</span>
                </div>
              </div>
              <div class="item i1"><svg width="18" height="18"><use href="#issues" /></svg><span v-fit="38" class="t">Issues</span></div>
              <div class="item i2"><svg width="18" height="18"><use href="#components" /></svg><span v-fit="81" class="t">Components</span></div>
              <span v-fit="83" class="t sect s2">DEVELOPMENT</span>
              <div class="item i3"><svg width="18" height="18"><use href="#code" /></svg><span v-fit="32" class="t">Code</span></div>
              <div class="item i4"><svg width="20" height="18"><use href="#ship" /></svg><span v-fit="56" class="t">Releases</span></div>
              <div class="line" />
              <div class="item i5"><svg width="20" height="20"><use href="#page" /></svg><span v-fit="87" class="t">Project pages</span></div>
              <div class="item i5"><svg width="20" height="20"><use href="#shortcut" /></svg><span v-fit="82" class="t">Add shortcut</span></div>
              <div class="item i5"><svg width="20" height="20"><use href="#gear" /></svg><span v-fit="100" class="t">Project settings</span></div>
              <span v-fit="204" class="t managed">You're in a company-managed project</span>
              <span v-fit="63" class="t learn">Learn more</span>
            </nav>

            <main class="main">
              <div class="crumbs">
                <span v-fit="52" class="t">Projects</span><span class="t sl">/</span><span v-fit="86" class="t">netology-soft</span><span class="t sl">/</span><span v-fit="39" class="t">Scrum</span>
              </div>
              <div class="titlerow">
                <h1 v-fit="157" class="t">Scrum Sprint 1</h1>
                <div class="actions">
                  <svg class="a1" width="16" height="20" viewBox="0 0 16 20"><path d="M6 2h8l-2 5h2.500L4 18l1-6.500H2z" fill="none" stroke="currentColor" stroke-width="1.900" stroke-linejoin="round" /></svg>
                  <svg class="a2" width="18" height="18" viewBox="0 0 18 18"><path d="M9 2l2.100 4.600 4.900.6-3.600 3.400.9 4.900L9 13.100l-4.300 2.400.9-4.900L2 7.200l4.900-.6z" fill="none" stroke="currentColor" stroke-width="1.900" stroke-linejoin="round" /></svg>
                  <svg class="a3" width="16" height="16" viewBox="0 0 16 16"><circle cx="8" cy="8" r="7" fill="none" stroke="currentColor" stroke-width="2" /><path d="M8 3.500V9l2.500 1.500" fill="none" stroke="currentColor" stroke-width="1.800" /></svg>
                  <span v-fit="106" class="t days">9 days remaining</span>
                  <button class="complete"><span v-fit="102" class="t">Complete sprint</span></button>
                  <svg class="a4" width="20" height="20" viewBox="0 0 20 20"><path d="M4 10l12-6.500M4 10l12 6.500" stroke="currentColor" stroke-width="1.800" /><g fill="#fff" stroke="currentColor" stroke-width="1.800"><circle cx="4" cy="10" r="2.100" /><circle cx="16" cy="3.800" r="2.100" /><circle cx="16" cy="16.200" r="2.100" /></g></svg>
                  <button class="more"><i /><i /><i /></button>
                </div>
              </div>
              <div class="filters">
                <div class="bsearch"><span v-fit="109" class="t">Search this board</span><svg width="13" height="13"><use href="#search" /></svg></div>
                <div class="faces"><svg class="f2" width="32" height="32"><use href="#person" /></svg><svg class="f1" width="34" height="34"><use href="#person" /></svg></div>
                <button class="only"><span v-fit="96" class="t">Only My Issues</span></button>
                <button class="recent"><span v-fit="116" class="t">Recently Updated</span></button>
                <button class="insights"><svg width="20" height="20"><use href="#chart" /></svg><span v-fit="51" class="t">Insights</span></button>
              </div>
              <div class="columns">
                <section v-for="c in columns" :key="c.name" class="col">
                  <h2 v-fit="c.w" class="t">{{ c.name }}</h2>
                  <article v-for="k in c.cards" :key="k.key" class="card" :class="{ tall: k.label }">
                    <span v-fit="k.w" class="t ctitle">{{ k.title }}</span>
                    <div v-if="k.label" class="label"><span v-fit="54" class="t">{{ k.label }}</span></div>
                    <div class="meta">
                      <svg width="14" height="14"><use :href="'#' + k.type" /></svg>
                      <i class="prio" />
                      <span v-fit="38" class="t key">{{ k.key }}</span>
                    </div>
                  </article>
                </section>
              </div>
            </main>
          </div>
        </div>
      </div>
    </div>
    <div class="widget"><svg width="24" height="24" viewBox="0 0 20 20"><rect width="20" height="20" rx="1" fill="url(#gSoft)" /><path d="M4.500 5.500l2.500 2-2.500 2M15.500 5.500l-2.500 2 2.500 2M8.500 9.500q1.500 1 3 0" fill="none" stroke="#8c8d99" stroke-width="1.300" /></svg></div>
  </div>
</template>

<style>
body { margin: 0; overflow: hidden; }
</style>

<style scoped>
* { box-sizing: border-box; }
.defs { position: absolute; }
svg, i { display: block; flex: none; }
button { border: 0; padding: 0; font: inherit; color: inherit; display: flex; align-items: center; justify-content: center; flex: none; border-radius: 3px; }
h1, h2 { margin: 0; }
.t { display: block; flex: none; width: max-content; white-space: pre; }
.screen { position: relative; width: 1920px; height: 1080px; overflow: hidden; font-family: "Noto Sans", sans-serif; font-size: 14px; line-height: 20px; display: flex; flex-direction: column; background: #fff; }

.sysbar { height: 27px; flex: none; background: #131313; color: #f2f2f2; display: flex; align-items: center; font-size: 14.5px; padding: 0 0 1px 18px; }
.obzor { margin-right: 37px; }
.appname { margin-left: 6px; }
.date { margin-left: 652px; }
.sysbell { margin-left: 18px; }
.lang { margin-left: 679px; }
.net { margin-left: 34px; }
.vol { margin-left: 13px; }
.pow { margin-left: 12px; }

.desktop { flex: 1; display: flex; min-height: 0; }
.dock { width: 70px; flex: none; background: linear-gradient(#180c12 0%, #1a0f15 60%, #271520 100%); }
.dock-list.first { padding: 2px 0 1px; }
.dock-item { display: flex; align-items: center; padding-left: 11px; position: relative; }
.dock-item.running::before { content: ""; position: absolute; left: 3px; top: 2px; width: 64px; height: 64px; border-radius: 10px; background: #473d43; }
.dock-item svg { position: relative; }
.dots { position: absolute; left: 3px; top: 0; height: 100%; display: flex; flex-direction: column; justify-content: center; gap: 3px; z-index: 1; }
.dots i { width: 6px; height: 6px; border-radius: 50%; background: #e95420; }
.dock-sep { width: 48px; height: 1px; background: #d8d4d6; margin: 0 0 1px 11px; }
.apps-grid { display: grid; grid-template-columns: repeat(3, 6px); gap: 6px; margin: 41px 0 0 20px; }
.apps-grid i { width: 6px; height: 6px; border-radius: 1.5px; background: #f5f5f5; }

.ybar { width: 48px; flex: none; background: #23262f; display: flex; flex-direction: column; align-items: center; padding-top: 6px; }
.y2 { margin-top: 15px; }
.y3 { margin-top: 18px; }
.y4 { margin-top: 18px; }
.count { width: 20px; height: 20px; margin-top: 19px; border: 1.3px solid #e8e8ea; border-radius: 4px; display: flex; align-items: center; justify-content: center; color: #e8e8ea; font-size: 9px; line-height: 12px; }
.y6 { margin-top: 19px; }
.ygroup { width: 36px; height: 68px; margin-top: 628px; border-radius: 9px; background: #565861; display: flex; flex-direction: column; align-items: center; padding-top: 6px; gap: 13px; }
.y7 { margin: 12px 0 0 2px; }
.y8 { margin-top: 12px; }
.y9 { margin-top: 23px; }

.browser { flex: 1; min-width: 0; display: flex; flex-direction: column; background: #23262f; }
.tabstrip { height: 36px; flex: none; display: flex; align-items: center; }
.private { width: 58px; height: 26px; border-radius: 8px; background: #43444d; display: flex; align-items: center; }
.private-on { width: 32px; height: 26px; border-radius: 8px; background: #b0b0b3; display: flex; align-items: center; justify-content: center; }
.pchev { margin-left: 9px; }
.vsep { width: 1px; height: 18px; background: #55575f; margin-left: 8px; }
.tback { margin: 0 14px 0 12px; }
.halftab { width: 4px; height: 14px; background: linear-gradient(90deg, #23262f 1px, #c5351e 1px, #c5351e 3px, #23262f 3px); }
.tab { width: 22px; height: 20px; flex: none; border-left: 1px solid #50525a; display: flex; align-items: center; justify-content: center; padding-left: 1px; }
.tab.on { height: 36px; border: 0; padding-left: 2px; background: #4b4b54; border-radius: 7px 7px 0 0; }
.tab.after { border-color: transparent; }
.ya { width: 16px; height: 16px; border-radius: 50%; background: #fc3f1d; color: #fff; font: 700 11.5px/16px "Liberation Sans", sans-serif; text-align: center; }
.tabend { width: 1px; height: 20px; background: #50525a; }
.newtab { width: 23px; height: 23px; margin-left: 14px; border-radius: 50%; background: #43444d; display: flex; align-items: center; justify-content: center; }
.w1 { margin-left: 64px; }
.w2 { margin-left: 31px; }
.w3 { margin-left: 27px; }
.w4 { margin-left: 34px; }
.w5 { margin-left: 33px; }

.toolbar { height: 40px; flex: none; background: #45454e; border-radius: 8px 8px 0 0; display: flex; align-items: center; color: #e9e9eb; font-size: 16.5px; }
.b1 { margin-left: 17px; }
.b2 { margin-left: 27px; }
.b3 { margin-left: 26px; }
.lock { width: 24px; height: 24px; margin-left: 20px; border-radius: 6px; background: #3b3c45; display: flex; align-items: center; justify-content: center; }
.url { width: 190px; height: 24px; margin-left: 2px; padding-left: 8px; border-radius: 6px; background: #3b3c45; display: flex; align-items: center; color: #909197; }
.ptitle { margin-left: 273px; }
.b4 { width: 17px; height: 16px; margin-left: 433px; display: flex; align-items: flex-start; color: #9c9da3; }
.b4 span:first-child { font-size: 11px; line-height: 12px; padding-top: 4px; width: 7px; }
.b4 span:last-child { font: 10px/10px "Noto Sans CJK JP", sans-serif; }
.b5 { margin-left: 22px; }
.bsep { width: 1px; height: 16px; background: #64656c; margin: 0 6px 0 19px; }
.ext { width: 44px; display: flex; align-items: center; justify-content: center; }
.ext svg { width: 20px; height: 20px; }
.ext.codefile svg, .ext.download svg { width: 24px; height: 24px; }
.mbadge { width: 20px; height: 20px; border-radius: 50%; background: #9aa3ad; color: #fff; font-size: 11.5px; line-height: 20px; font-weight: 700; text-align: center; }
.dl { position: relative; width: 24px; height: 24px; }
.dl b { position: absolute; left: 13px; top: 13px; width: 12px; height: 12px; border-radius: 50%; background: #0b7bd8; color: #fff; font-size: 10px; line-height: 12px; font-weight: 400; text-align: center; }

.page { flex: 1; background: #fff; display: flex; flex-direction: column; min-height: 0; color: #42526e; }
.jhead { height: 56px; flex: none; display: flex; align-items: center; padding-left: 22px; position: relative; z-index: 2; background: #fff; box-shadow: 0 1px 1px #dcdee3, 0 3px 3px rgba(9, 30, 66, .06); color: #344563; }
.switcher { display: grid; grid-template-columns: repeat(3, 4px); gap: 2px; width: 17px; }
.switcher i { width: 4px; height: 4px; border-radius: 1px; background: #344563; }
.jlogo { margin-left: 13px; }
.jname { margin: -2px 31px 0 5px; font-family: Lato, sans-serif; font-size: 19.5px; color: #253858; }
.navitem { display: flex; align-items: center; gap: 3px; margin-right: 19px; height: 56px; font-weight: 600; font-size: 13.5px; position: relative; }
.navitem svg { color: #97a0af; }
.navitem.on { color: #0052cc; }
.navitem.on svg { color: #7aa3e5; }
.navitem.on::after { content: ""; position: absolute; left: -2px; right: -1px; bottom: 0; height: 3px; background: #0052cc; border-radius: 1px 1px 0 0; }
.create { width: 68px; height: 32px; margin-left: 2px; background: #0052cc; color: #fff; font-weight: 600; font-size: 13.5px; }
.jsearch { width: 200px; height: 32px; margin-left: 632px; border: 2px solid #dfe1e6; border-radius: 5px; display: flex; align-items: center; padding-left: 7px; gap: 9px; font-family: "Liberation Sans", sans-serif; color: #6b778c; }
.h1 { margin-left: 13px; }
.h2 { margin-left: 21px; }
.h3 { margin-left: 20px; }
.h4 { margin-left: 20px; color: #0052cc; }

.jbody { flex: 1; display: flex; min-height: 0; }
.side { width: 242px; flex: none; background: #fafbfc; border-right: 2px solid #e7e9ed; padding-top: 30px; color: #42526e; }
.proj { display: flex; align-items: center; gap: 12px; margin-left: 24px; height: 40px; }
.pname { font-weight: 600; }
.psub { font-size: 12px; color: #6b778c; }
.plan { margin: 12px 0 0 24px; font-size: 12px; font-weight: 700; }
.upgrade { width: 110px; height: 34px; margin: 6px 0 0 24px; border: 1.5px solid transparent; border-radius: 17px; background: linear-gradient(#fff, #fff) padding-box, linear-gradient(90deg, #8777d9, #79a6ec 55%, #a9dde4) border-box; box-shadow: 0 1px 6px rgba(9, 30, 66, .1); display: flex; align-items: center; padding-left: 16px; gap: 5px; color: #0c66e4; font-size: 12px; font-weight: 700; }
.sect { font-size: 11px; line-height: 16px; font-weight: 700; }
.s1 { margin: 28px 0 0 28px; }
.s2 { margin: 20px 0 6px 27px; }
.boardbox { width: 219px; height: 212px; margin: 6px 0 6px 11px; padding: 4px 4px 0; border-radius: 8px; background: #e6f0fc; }
.boardhead { display: flex; align-items: center; justify-content: space-between; padding: 0 11px 0 14px; color: #0052cc; }
.boardhead svg { margin-top: 1px; }
.bname { font-weight: 600; font-size: 13.5px; }
.bsub { font-size: 12px; }
.item { display: flex; align-items: center; height: 40px; gap: 14px; padding-left: 16px; position: relative; }
.item.on { background: #cbddfa; border-radius: 3px; color: #0052cc; margin-bottom: 2px; }
.item.on::before { content: ""; position: absolute; left: 0; top: 12px; width: 4px; height: 16px; background: #0052cc; }
.i1, .i2 { padding-left: 31px; gap: 15px; }
.i1 { margin-bottom: 2px; }
.i3 { padding-left: 30px; gap: 15px; }
.i4 { padding-left: 29px; gap: 14px; }
.line { height: 2px; margin: 8px 8px 8px; background: #e6e8ec; }
.i5 { padding-left: 27px; gap: 14px; margin-bottom: 2px; }
.managed { margin: 93px 0 0 18px; font-size: 12px; }
.learn { margin: 6px 0 0 88px; font-size: 12px; font-weight: 500; color: #6b778c; }

.main { flex: 1; min-width: 0; padding: 26px 32px 0 38px; }
.crumbs { display: flex; height: 20px; margin-left: -4px; color: #6b778c; }
.sl { width: 24px; text-align: center; }
.titlerow { display: flex; margin-top: 4px; height: 32px; align-items: center; justify-content: space-between; }
h1 { font-size: 23.5px; line-height: 32px; font-weight: 600; color: #172b4d; }
.actions { display: flex; align-items: center; margin-top: -4px; }
.a2 { margin-left: 22px; }
.a3 { margin-left: 18px; margin-top: 2px; }
.days { margin-left: 8px; }
.complete { width: 122px; height: 32px; margin-left: 9px; background: #f4f5f7; color: #5e6c84; }
.a4 { margin-left: 16px; }
.more { width: 36px; height: 32px; margin: 0 8px 0 32px; background: #f4f5f7; gap: 2px; }
.more i { width: 4px; height: 4px; border-radius: 50%; background: #42526e; }
.filters { display: flex; align-items: center; height: 40px; margin-top: 22px; }
.bsearch { width: 184px; height: 40px; border: 2px solid #dfe1e6; border-radius: 3px; background: #fafbfc; display: flex; align-items: center; justify-content: space-between; padding: 0 9px 0 6px; color: #7a869a; }
.bsearch svg { color: #5e6c84; }
.faces { display: flex; flex-direction: row-reverse; margin-left: 5px; width: 63px; align-items: center; }
.f1 { color: #0052cc; margin-right: -3px; border: 1px solid #fff; border-radius: 50%; position: relative; }
.f2 { color: #8993a4; }
.only, .recent, .insights { height: 32px; background: #f4f5f7; font-weight: 600; font-size: 13.5px; }
.only { width: 116px; margin-left: 16px; }
.recent { width: 137px; margin-left: 8px; }
.insights { width: 103px; margin: -8px 10px 0 auto; gap: 6px; padding-left: 1px; }
.columns { display: flex; gap: 10px; margin-top: 16px; }
.col { width: 490px; height: 353px; background: #f4f5f7; border-radius: 5px; padding: 18px 5px 0; }
h2 { margin: 0 0 15px 12px; font-size: 12px; line-height: 20px; font-weight: 600; color: #5e6c84; }
.card { height: 74px; background: #fff; border-radius: 2px; box-shadow: 0 1px 2px rgba(9, 30, 66, .28); padding: 10px 15px 0 10px; margin-bottom: 5px; color: #172b4d; }
.card.tall { height: 106px; }
.card.tall:last-child { height: 105px; }
.card:last-child .label { margin-top: 11px; }
.label { width: 66px; height: 20px; margin-top: 12px; border-radius: 3px; background: #00875a; color: #fff; font-size: 11px; line-height: 20px; font-weight: 700; display: flex; justify-content: center; }
.meta { display: flex; align-items: center; height: 20px; margin-top: 12px; color: #5e6c84; padding-left: 1px; }
.tall .meta svg, .tall .prio { margin-top: -2px; }
.prio { width: 12px; height: 8px; margin: 0 auto 0 8px; border: solid #ffab00; border-width: 2px 0; }
.widget { position: absolute; right: 0; top: 838px; width: 34px; height: 34px; background: #9b9da9; border-radius: 4px 0 0 4px; padding: 5px; z-index: 3; box-shadow: 0 1px 8px rgba(0, 0, 0, .08); }
</style>
